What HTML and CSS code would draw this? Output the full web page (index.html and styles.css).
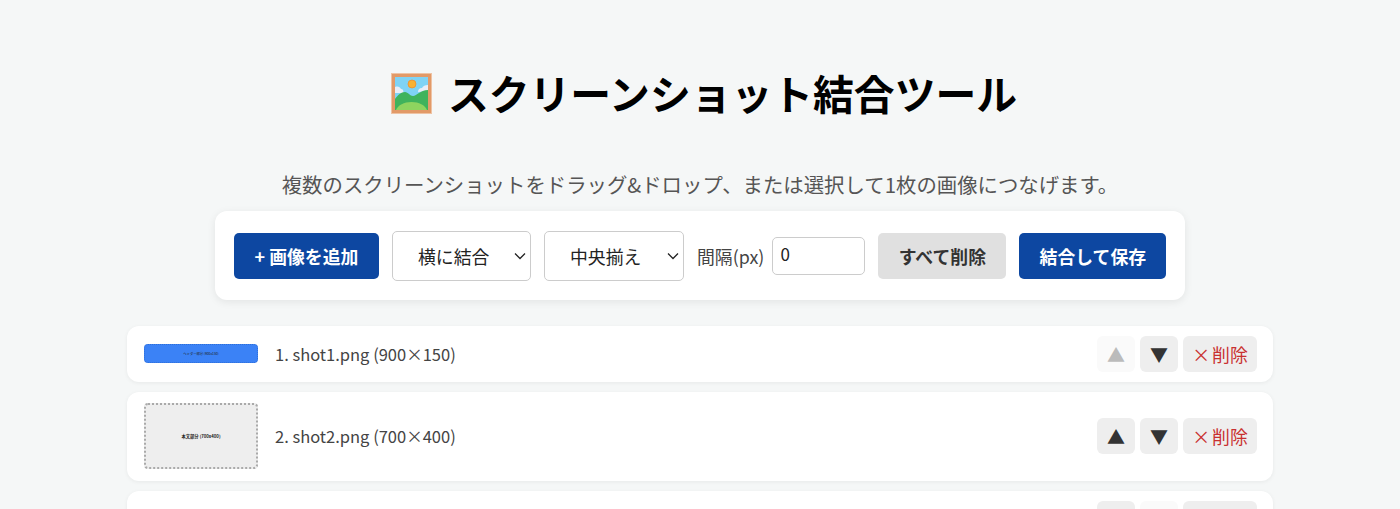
FILE: index.html
```html
<!DOCTYPE html>
<html lang="ja">
<head>
<meta charset="utf-8">
<title>スクリーンショット結合ツール</title>
<link rel="stylesheet" href="styles.css">
</head>
<body>
<main class="page">
  <h1 class="title">
    <svg class="emoji" viewBox="0 0 41 41" aria-hidden="true">
      <rect width="41" height="41" fill="#e29a68"/>
      <rect x="0.5" y="0.5" width="40" height="40" fill="none" stroke="#eec3a4"/>
      <rect x="4" y="4" width="33" height="33" fill="#7fd3f5"/>
      <circle cx="21" cy="11" r="4" fill="#f9b233" stroke="#ef8f2e" stroke-width=".8"/>
      <path d="M4 14c3-1 5 0 6 2 2 0 3 2 2 4H4z" fill="#e9edf7"/>
      <path d="M37 12c-3 0-5 1-6 3-3 0-4 2-4 4l10-1z" fill="#e9edf7"/>
      <path d="M4 26c3-4 6-7 10-7 3 0 5 4 8 4 4 0 7-6 15-6v20H4z" fill="#3fb35c"/>
      <path d="M5 37c2-5 8-8 15.500-8S34 32 36 37z" fill="#8ed45f"/>
    </svg>
    <span>スクリーンショット結合ツール</span>
  </h1>
  <p class="lead">複数のスクリーンショットをドラッグ&amp;ドロップ、または選択して1枚の画像につなげます。</p>

  <section class="toolbar">
    <button class="btn btn-primary btn-add" type="button">+ 画像を追加</button>
    <select class="picker picker-dir"><option>横に結合</option><option>縦に結合</option></select>
    <select class="picker"><option>中央揃え</option><option>左揃え</option></select>
    <label class="gap-field">
      <span class="gap-label">間隔(px)</span>
      <input class="gap-input" type="number" value="0">
    </label>
    <button class="btn btn-muted" type="button">すべて削除</button>
    <button class="btn btn-primary" type="button">結合して保存</button>
  </section>

  <ul class="list">
    <li class="row">
      <div class="thumb thumb-blue"><span>ヘッダー部分 (900x150)</span></div>
      <span class="name">1. shot1.png (900×150)</span>
      <div class="actions">
        <button class="act act-off" type="button">▲</button>
        <button class="act" type="button">▼</button>
        <button class="act act-del" type="button">× 削除</button>
      </div>
    </li>
    <li class="row">
      <div class="thumb thumb-grey"><span>本文部分 (700x400)</span></div>
      <span class="name">2. shot2.png (700×400)</span>
      <div class="actions">
        <button class="act" type="button">▲</button>
        <button class="act" type="button">▼</button>
        <button class="act act-del" type="button">× 削除</button>
      </div>
    </li>
    <li class="row">
      <div class="thumb thumb-grey"><span>フッター部分 (800x200)</span></div>
      <span class="name">3. shot3.png (800×200)</span>
      <div class="actions">
        <button class="act" type="button">▲</button>
        <button class="act act-off" type="button">▼</button>
        <button class="act act-del" type="button">× 削除</button>
      </div>
    </li>
  </ul>
</main>
</body>
</html>
```
FILE: styles.css
```css
* { box-sizing: border-box; }
html, body { margin: 0; height: 509px; overflow: hidden; }
body {
  background: #f5f7f7;
  color: #333;
  font-family: "Noto Sans CJK JP", "Noto Sans", sans-serif;
}
.page { display: flex; flex-direction: column; align-items: center; padding-top: 64px; }
.title {
  display: flex; align-items: center; justify-content: center; gap: 16px;
  margin: 0 0 47px 8px; color: #000; font-size: 40.8px; line-height: 58px; font-weight: 700;
}
.emoji { width: 41px; height: 41px; }
.lead { margin: 0 0 12px; font-size: 20.4px; line-height: 30px; color: #555; }
.toolbar {
  display: flex; align-items: center; gap: 13px;
  width: 970px; height: 89px; padding: 0 19px;
  background: #fff; border-radius: 12px; box-shadow: 0 2px 8px rgba(0,0,0,.08);
}
.btn {
  flex: none; height: 46px; padding: 0; width: 147px; border: 0; border-radius: 5px;
  font: 700 17.85px "Noto Sans CJK JP", sans-serif;
}
.btn-add { width: 145px; }
.btn-primary { background: #0d47a1; color: #fff; }
.btn-muted { width: 128px; background: #e0e0e0; color: #333; }
.picker {
  flex: none; appearance: none;
  width: 140px; height: 50px; padding: 0 0 0 25px;
  background: #fff url("data:image/svg+xml,%3Csvg xmlns='http://www.w3.org/2000/svg' width='12' height='8' viewBox='0 0 12 8'%3E%3Cpath d='M1 1.500l5 5 5-5' fill='none' stroke='%23222' stroke-width='1.300'/%3E%3C/svg%3E") no-repeat right 4px center;
  color: #222; border: 1px solid #ccc; border-radius: 5px;
  font: 17.85px "Noto Sans CJK JP", sans-serif;
}
.picker-dir { width: 139px; }
.gap-field { flex: none; display: flex; align-items: center; gap: 8px; font-size: 17.85px; color: #444; }
.gap-label { white-space: nowrap; }
.gap-input {
  width: 93px; height: 38px; padding: 0 7px 4px; border: 1px solid #ccc; border-radius: 5px;
  background: #fff; color: #222; font: 17px "Noto Sans CJK JP", sans-serif;
}
.list {
  list-style: none; margin: 26px 0 0; padding: 0; width: 1146px;
  display: flex; flex-direction: column; gap: 10px;
}
.row {
  display: flex; align-items: center; gap: 17px;
  padding: 10px 16px 10px 17px;
  background: #fff; border-radius: 12px; box-shadow: 0 1px 4px rgba(0,0,0,.06);
}
.thumb {
  flex: none; display: flex; align-items: center; justify-content: center;
  width: 114px; border-radius: 4px; color: #222; white-space: nowrap;
}
.thumb-blue { height: 19px; margin-bottom: 1px; background: #3b82f6; border: 1px dotted #2f6fd8; font-size: 3.300px; }
.thumb-grey { height: 66px; margin: 1.250px 0; background: #eee; border: 2px dotted #aaa; font-size: 4.300px; font-weight: 700; }
.row:nth-child(3) .thumb { height: 20px; }
.name { flex: 1; font-size: 16.500px; color: #444; }
.actions { display: flex; gap: 5px; }
.act {
  width: 38px; height: 36px; padding: 0; border: 0; border-radius: 6px;
  background: #eee; color: #333; font: 18px "Noto Sans CJK JP", sans-serif;
}
.act-off { background: #fafafa; color: #bbb; }
.act-del { width: 74px; color: #c93030; font-size: 17.85px; word-spacing: -2px; }
```
